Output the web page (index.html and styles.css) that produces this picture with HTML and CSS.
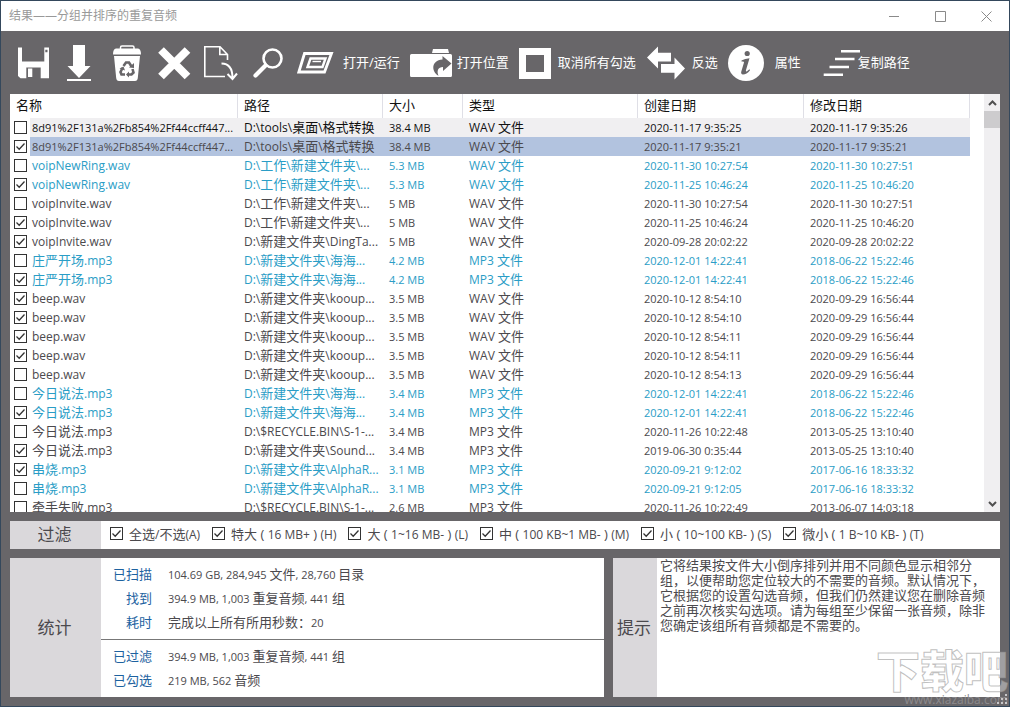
FILE: index.html
```html
<!DOCTYPE html>
<html lang="zh-CN">
<head>
<meta charset="utf-8">
<title>结果——分组并排序的重复音频</title>
<link rel="stylesheet" href="styles.css">
</head>
<body>
<div class="window">
  <header class="titlebar">
    <h1 class="title">结果——分组并排序的重复音频</h1>
    <div class="controls">
      <button class="control" aria-label="最小化"><svg width="11" height="11"><path d="M0 5.500H10"/></svg></button>
      <button class="control" aria-label="最大化"><svg width="11" height="11"><path d="M.5 .5H10.500V10.500H.5Z"/></svg></button>
      <button class="control" aria-label="关闭"><svg width="11" height="11"><path d="M.5 .5L10.500 10.500M10.500 .5L.5 10.500"/></svg></button>
    </div>
  </header>

  <nav class="toolbar">
    <div class="tools">
      <button class="tool" aria-label="保存"><svg width="47" height="41" viewBox="10 42 47 41"><path fill="#fff" fill-rule="evenodd" d="M18 47.500H22V61.500H44.300V47.500H49V78.300H40.700V67.500H26.300V78.300H20.500L18 76ZM45.300 49.800V52.200H47.500V49.800Z"/><path fill="#fff" d="M28 68.500H32.300V77H28Z"/></svg></button>
      <button class="tool" aria-label="下载"><svg width="47" height="41" viewBox="57 42 47 41"><path fill="#fff" d="M73 45H85V66H90.500L79 78L67.500 66H73ZM67 79H91V81H67Z"/></svg></button>
      <button class="tool" aria-label="删除到回收站"><svg width="47" height="41" viewBox="104 42 47 41"><path fill="none" stroke="#fff" stroke-width="1.500" d="M120.500 49V47.500Q120.500 46 122 46H132.500Q134 46 134 47.500V49"/><path fill="#fff" d="M116 48.500H138Q141 49 141 54.500H113Q113 49 116 48.500ZM114 56H140L137.800 78Q137.500 81 135 81H119Q116.500 81 116.200 78Z"/><g fill="none" stroke="#686669" stroke-width="2.600"><path d="M123.500 66L126 62.500H129L131.500 66.500M132.500 69L133.500 72.500L131.500 74.500H127.500M125 74.500H121.500L120.500 72L122.500 68"/></g><path fill="#686669" d="M129 67.500L134 68V63ZM129 71.500L126 74.500L129 77.500ZM119.500 68.500L123.500 66.500L125 70.500Z"/></svg></button>
      <button class="tool" aria-label="移除"><svg width="47" height="41" viewBox="151 42 47 41"><path stroke="#fff" stroke-width="8" d="M161 50L187.500 76.500M187.500 50L161 76.500"/></svg></button>
      <button class="tool" aria-label="移动"><svg width="47" height="41" viewBox="198 42 47 41"><g fill="none" stroke="#fff" stroke-width="1.600"><path d="M225 76.500H204.800V46.800H220L227.500 54.500V60M219.800 47V54.500H227.500"/><path d="M221.500 63.500Q232.500 63.500 232.500 78M227.500 74L232.500 79L237 73.500" stroke-width="2"/></g></svg></button>
      <button class="tool" aria-label="搜索"><svg width="47" height="41" viewBox="245 42 47 41"><g fill="none" stroke="#fff"><circle cx="272.500" cy="58.500" r="9" stroke-width="2.600"/><path d="M265.500 65.500L255.500 75.500" stroke-width="4.200" stroke-linecap="round"/></g></svg></button>
    </div>
    <div class="actions">
      <button class="action"><svg width="40" height="41" viewBox="297 42 40 41"><g fill="none" stroke="#fff"><path stroke-width="2.800" d="M304.500 53.500H331.500L324.500 72H298.800Z"/><path stroke-width="2.400" d="M310.500 58.500H325.500L322.500 67H307.500Z"/><path stroke-width="1.400" d="M312.500 61.500H321"/></g></svg><span>打开/运行</span></button>
      <button class="action"><svg width="42" height="41" viewBox="409 42 42 41"><path fill="#fff" d="M433 49H448L449 53H432ZM411.500 54H450.500Q452 54 452 55.500V75.500Q452 77 450.500 77H411.500Q410 77 410 75.500V55.500Q410 54 411.500 54Z"/><path fill="#686669" d="M442.500 56L451.500 63.500L443 71V67C438 67 436.500 71 438.500 75.800C431.500 72 430.500 60.500 442.500 59.500Z"/></svg><span>打开位置</span></button>
      <button class="action"><svg width="34" height="41" viewBox="518 42 34 41"><path fill="#fff" fill-rule="evenodd" d="M519 48H551V79H519ZM526 55V72H544V55Z"/></svg><span>取消所有勾选</span></button>
      <button class="action"><svg width="41" height="41" viewBox="645 42 41 41"><path fill="#fff" d="M647 57.500L658 46.500V52.800H671V61.500H658V68.500ZM685 68.500L674.500 57.500V64H661V72.800H674.500V79.500Z"/></svg><span>反选</span></button>
      <button class="action"><svg width="42" height="41" viewBox="727 42 42 41"><circle cx="746" cy="63" r="18" fill="#fff"/><circle cx="747.200" cy="53.500" r="2.600" fill="#686669"/><path fill="#686669" d="M741.500 60.500Q745 58.500 749.500 58.200L746 70Q745.500 72 747 71.200L749.500 69.200L750 70.200Q746.500 74.500 743 74.500Q740.500 74.200 741.300 71.500L744 62.500Q744.300 61 741.500 61.500Z"/></svg><span>属性</span></button>
      <button class="action"><svg width="42" height="41" viewBox="810 42 42 41"><path stroke="#fff" stroke-width="2.400" d="M841 51.300H860M835 59H854.500M829.500 67H849M823.700 74.700H843"/></svg><span>复制路径</span></button>
    </div>
  </nav>

  <main class="content">
    <section class="list">
      <div class="rows">
        <table class="files">
          <colgroup><col><col class="w-path"><col class="w-size"><col class="w-type"><col class="w-date"><col class="w-date"></colgroup>
          <thead><tr><th>名称</th><th>路径</th><th>大小</th><th>类型</th><th>创建日期</th><th>修改日期</th></tr></thead>
          <tbody>
            <tr class="hot"><td><label><input type="checkbox"><span class="name hash">8d91%2F131a%2Fb854%2Ff44ccff447...</span></label></td><td>D:\tools\<span class="zh">桌面</span>\<span class="zh">格式转换</span></td><td>38.4 MB</td><td>WAV <span class="zh">文件</span></td><td>2020-11-17 9:35:25</td><td>2020-11-17 9:35:26</td></tr>
            <tr class="selected"><td><label><input type="checkbox" checked><span class="name hash">8d91%2F131a%2Fb854%2Ff44ccff447...</span></label></td><td>D:\tools\<span class="zh">桌面</span>\<span class="zh">格式转换</span></td><td>38.4 MB</td><td>WAV <span class="zh">文件</span></td><td>2020-11-17 9:35:21</td><td>2020-11-17 9:35:21</td></tr>
            <tr class="alt"><td><label><input type="checkbox"><span class="name">voipNewRing.wav</span></label></td><td>D:\<span class="zh">工作</span>\<span class="zh">新建文件夹</span>\...</td><td>5.3 MB</td><td>WAV <span class="zh">文件</span></td><td>2020-11-30 10:27:54</td><td>2020-11-30 10:27:51</td></tr>
            <tr class="alt"><td><label><input type="checkbox" checked><span class="name">voipNewRing.wav</span></label></td><td>D:\<span class="zh">工作</span>\<span class="zh">新建文件夹</span>\...</td><td>5.3 MB</td><td>WAV <span class="zh">文件</span></td><td>2020-11-25 10:46:24</td><td>2020-11-25 10:46:20</td></tr>
            <tr><td><label><input type="checkbox"><span class="name">voipInvite.wav</span></label></td><td>D:\<span class="zh">工作</span>\<span class="zh">新建文件夹</span>\...</td><td>5 MB</td><td>WAV <span class="zh">文件</span></td><td>2020-11-30 10:27:54</td><td>2020-11-30 10:27:51</td></tr>
            <tr><td><label><input type="checkbox" checked><span class="name">voipInvite.wav</span></label></td><td>D:\<span class="zh">工作</span>\<span class="zh">新建文件夹</span>\...</td><td>5 MB</td><td>WAV <span class="zh">文件</span></td><td>2020-11-25 10:46:24</td><td>2020-11-25 10:46:20</td></tr>
            <tr><td><label><input type="checkbox" checked><span class="name">voipInvite.wav</span></label></td><td>D:\<span class="zh">新建文件夹</span>\DingTa...</td><td>5 MB</td><td>WAV <span class="zh">文件</span></td><td>2020-09-28 20:02:22</td><td>2020-09-28 20:02:22</td></tr>
            <tr class="alt"><td><label><input type="checkbox"><span class="name"><span class="zh">庄严开场</span>.mp3</span></label></td><td>D:\<span class="zh">新建文件夹</span>\<span class="zh">海海</span>...</td><td>4.2 MB</td><td>MP3 <span class="zh">文件</span></td><td>2020-12-01 14:22:41</td><td>2018-06-22 15:22:46</td></tr>
            <tr class="alt"><td><label><input type="checkbox" checked><span class="name"><span class="zh">庄严开场</span>.mp3</span></label></td><td>D:\<span class="zh">新建文件夹</span>\<span class="zh">海海</span>...</td><td>4.2 MB</td><td>MP3 <span class="zh">文件</span></td><td>2020-12-01 14:22:41</td><td>2018-06-22 15:22:46</td></tr>
            <tr><td><label><input type="checkbox" checked><span class="name">beep.wav</span></label></td><td>D:\<span class="zh">新建文件夹</span>\kooup...</td><td>3.5 MB</td><td>WAV <span class="zh">文件</span></td><td>2020-10-12 8:54:10</td><td>2020-09-29 16:56:44</td></tr>
            <tr><td><label><input type="checkbox" checked><span class="name">beep.wav</span></label></td><td>D:\<span class="zh">新建文件夹</span>\kooup...</td><td>3.5 MB</td><td>WAV <span class="zh">文件</span></td><td>2020-10-12 8:54:10</td><td>2020-09-29 16:56:44</td></tr>
            <tr><td><label><input type="checkbox" checked><span class="name">beep.wav</span></label></td><td>D:\<span class="zh">新建文件夹</span>\kooup...</td><td>3.5 MB</td><td>WAV <span class="zh">文件</span></td><td>2020-10-12 8:54:11</td><td>2020-09-29 16:56:44</td></tr>
            <tr><td><label><input type="checkbox" checked><span class="name">beep.wav</span></label></td><td>D:\<span class="zh">新建文件夹</span>\kooup...</td><td>3.5 MB</td><td>WAV <span class="zh">文件</span></td><td>2020-10-12 8:54:11</td><td>2020-09-29 16:56:44</td></tr>
            <tr><td><label><input type="checkbox"><span class="name">beep.wav</span></label></td><td>D:\<span class="zh">新建文件夹</span>\kooup...</td><td>3.5 MB</td><td>WAV <span class="zh">文件</span></td><td>2020-10-12 8:54:13</td><td>2020-09-29 16:56:44</td></tr>
            <tr class="alt"><td><label><input type="checkbox"><span class="name"><span class="zh">今日说法</span>.mp3</span></label></td><td>D:\<span class="zh">新建文件夹</span>\<span class="zh">海海</span>...</td><td>3.4 MB</td><td>MP3 <span class="zh">文件</span></td><td>2020-12-01 14:22:41</td><td>2018-06-22 15:22:46</td></tr>
            <tr class="alt"><td><label><input type="checkbox" checked><span class="name"><span class="zh">今日说法</span>.mp3</span></label></td><td>D:\<span class="zh">新建文件夹</span>\<span class="zh">海海</span>...</td><td>3.4 MB</td><td>MP3 <span class="zh">文件</span></td><td>2020-12-01 14:22:41</td><td>2018-06-22 15:22:46</td></tr>
            <tr><td><label><input type="checkbox"><span class="name"><span class="zh">今日说法</span>.mp3</span></label></td><td>D:\$RECYCLE.BIN\S-1-...</td><td>3.4 MB</td><td>MP3 <span class="zh">文件</span></td><td>2020-11-26 10:22:48</td><td>2013-05-25 13:10:40</td></tr>
            <tr><td><label><input type="checkbox" checked><span class="name"><span class="zh">今日说法</span>.mp3</span></label></td><td>D:\<span class="zh">新建文件夹</span>\Sound...</td><td>3.4 MB</td><td>MP3 <span class="zh">文件</span></td><td>2019-06-30 0:35:44</td><td>2013-05-25 13:10:40</td></tr>
            <tr class="alt"><td><label><input type="checkbox" checked><span class="name"><span class="zh">串烧</span>.mp3</span></label></td><td>D:\<span class="zh">新建文件夹</span>\AlphaR...</td><td>3.1 MB</td><td>MP3 <span class="zh">文件</span></td><td>2020-09-21 9:12:02</td><td>2017-06-16 18:33:32</td></tr>
            <tr class="alt"><td><label><input type="checkbox"><span class="name"><span class="zh">串烧</span>.mp3</span></label></td><td>D:\<span class="zh">新建文件夹</span>\AlphaR...</td><td>3.1 MB</td><td>MP3 <span class="zh">文件</span></td><td>2020-09-21 9:12:05</td><td>2017-06-16 18:33:32</td></tr>
            <tr><td><label><input type="checkbox"><span class="name"><span class="zh">牵手失败</span>.mp3</span></label></td><td>D:\$RECYCLE.BIN\S-1-...</td><td>2.6 MB</td><td>MP3 <span class="zh">文件</span></td><td>2020-11-26 10:22:49</td><td>2013-06-07 14:03:18</td></tr>
          </tbody>
        </table>
      </div>
      <div class="scrollbar">
        <button class="arrow" aria-label="向上滚动"><svg width="9" height="6"><path d="M1 5L4.500 1.500L8 5"/></svg></button>
        <div class="track"><div class="thumb"></div></div>
        <button class="arrow" aria-label="向下滚动"><svg width="9" height="6"><path d="M1 1L4.500 4.500L8 1"/></svg></button>
      </div>
    </section>

    <section class="panel filter">
      <h2 class="caption">过滤</h2>
      <div class="filters">
        <label><input type="checkbox" checked><span><span class="zh">全选</span>/<span class="zh">不选</span>(A)</span></label>
        <label><input type="checkbox" checked><span><span class="zh">特大 ( </span>16 MB+<span class="zh"> ) </span>(H)</span></label>
        <label><input type="checkbox" checked><span><span class="zh">大 ( </span>1~16 MB-<span class="zh"> ) </span>(L)</span></label>
        <label><input type="checkbox" checked><span><span class="zh">中 ( </span>100 KB~1 MB-<span class="zh"> ) </span>(M)</span></label>
        <label><input type="checkbox" checked><span><span class="zh">小 ( </span>10~100 KB-<span class="zh"> ) </span>(S)</span></label>
        <label><input type="checkbox" checked><span><span class="zh">微小 ( </span>1 B~10 KB-<span class="zh"> ) </span>(T)</span></label>
      </div>
    </section>

    <div class="bottom">
      <section class="panel stats">
        <h2 class="caption">统计</h2>
        <div class="figures">
          <dl>
            <dt>已扫描</dt><dd>104.69 GB, 284,945 <span class="zh">文件</span>, 28,760 <span class="zh">目录</span></dd>
            <dt>找到</dt><dd>394.9 MB, 1,003 <span class="zh">重复音频</span>, 441 <span class="zh">组</span></dd>
            <dt>耗时</dt><dd><span class="zh">完成以上所有所用秒数：</span>20</dd>
          </dl>
          <dl>
            <dt>已过滤</dt><dd>394.9 MB, 1,003 <span class="zh">重复音频</span>, 441 <span class="zh">组</span></dd>
            <dt>已勾选</dt><dd>219 MB, 562 <span class="zh">音频</span></dd>
          </dl>
        </div>
      </section>
      <section class="panel tips">
        <h2 class="caption">提示</h2>
        <p>它将结果按文件大小倒序排列并用不同颜色显示相邻分组，以便帮助您定位较大的不需要的音频。默认情况下，它根据您的设置勾选音频，但我们仍然建议您在删除音频之前再次核实勾选项。请为每组至少保留一张音频，除非您确定该组所有音频都是不需要的。</p>
      </section>
    </div>
  </main>

  <div class="watermark"><span class="mark">下载吧</span><span class="site">www.xiazaiba.com</span></div>
  <svg class="grip" width="11" height="11" fill="#c8c8ca"><path d="M8 0h2v2h-2zM4 4h2v2h-2zM8 4h2v2h-2zM0 8h2v2h-2zM4 8h2v2h-2zM8 8h2v2h-2z"/></svg>
</div>
</body>
</html>
```
FILE: styles.css
```css
* {
  box-sizing: border-box;
}

body {
  margin: 0;
  font: 12px "Open Sans", "Noto Sans CJK SC", sans-serif;
  color: #4b494d;
}

button {
  padding: 0;
  border: 0;
  background: none;
  color: inherit;
  font: inherit;
}

h1,
h2,
p,
dl,
dd {
  margin: 0;
  font-weight: 400;
}

.window {
  position: relative;
  display: flex;
  flex-direction: column;
  height: 100vh;
  overflow: hidden;
  border: 1px solid #34485c;
  background: #686669;
}

.zh {
  font-size: 13px;
}

/* Title bar */
.titlebar {
  display: flex;
  flex: none;
  justify-content: space-between;
  height: 30px;
  padding-left: 8px;
  background: #fff;
}

.title {
  color: #999;
  font-size: 12px;
  line-height: 30px;
}

.controls {
  display: flex;
}

.control {
  display: grid;
  place-items: center;
  width: 46px;
}

.control svg {
  fill: none;
  stroke: #8a8a8a;
}

/* Toolbar */
.toolbar {
  display: flex;
  flex: none;
  height: 63px;
  padding-left: 9px;
  color: #fff;
}

.tools,
.actions {
  display: flex;
}

.tool,
.action {
  display: flex;
  align-items: center;
}

.actions {
  gap: 9px;
  padding-left: 5px;
  font-size: 13px;
  white-space: nowrap;
}

.action {
  gap: 6px;
}

.action span {
  padding-bottom: 2px;
}

.toolbar svg {
  flex: none;
  overflow: visible;
}

/* Content */
.content {
  display: flex;
  flex: 1;
  flex-direction: column;
  gap: 9px;
  min-height: 0;
  padding: 0 9px 9px;
}

.list {
  display: flex;
  flex: 1;
  min-height: 0;
  overflow: hidden;
  background: #fff;
}

.rows {
  flex: 1;
  padding-right: 14px;
  overflow: hidden;
}

.files {
  width: 100%;
  border-collapse: separate;
  border-spacing: 0;
  table-layout: fixed;
}

.w-path {
  width: 145px;
}

.w-size {
  width: 80px;
}

.w-type {
  width: 175px;
}

.w-date {
  width: 166px;
}

th {
  height: 24px;
  padding: 0 6px 2px;
  border-right: 1px solid #dfdfe6;
  color: #111;
  font-size: 13px;
  font-weight: 400;
  line-height: 18px;
  text-align: left;
}

td {
  height: 19px;
  padding: 0 0 0 6px;
  overflow: hidden;
  line-height: 19px;
  white-space: nowrap;
}

td:first-child {
  padding-left: 4px;
}

td:nth-child(3),
td:nth-child(5),
td:nth-child(6) {
  font-size: 11px;
}

td .zh {
  line-height: 18px;
}

td label {
  display: flex;
  align-items: center;
  gap: 3px;
}

.name {
  flex: 1;
  height: 19px;
  padding-left: 2px;
}

.hash {
  font-size: 11px;
}

.alt {
  color: #2a9dc6;
}

.hot {
  color: #111;
}

.hot td:not(:first-child),
.hot .name {
  background: #f0eff1;
}

.selected td:not(:first-child),
.selected .name {
  background: #b2c3df;
}

input[type="checkbox"] {
  flex: none;
  width: 13px;
  height: 13px;
  margin: 0;
  border: 1px solid #333;
  background: #fff;
  appearance: none;
}

input[type="checkbox"]:checked {
  background: #fff url("data:image/svg+xml,%3Csvg xmlns='http://www.w3.org/2000/svg' width='11' height='11'%3E%3Cpath d='M1.500 5.500L4.200 8.200L9.500 2.500' fill='none' stroke='%23333' stroke-width='1.300'/%3E%3C/svg%3E");
}

.scrollbar {
  display: flex;
  flex-direction: column;
  width: 16px;
  background: #f0eff1;
}

.arrow {
  display: grid;
  place-items: center;
  height: 17px;
}

.arrow svg {
  fill: none;
  stroke: #505050;
  stroke-width: 2;
}

.track {
  flex: 1;
}

.thumb {
  height: 17px;
  background: #cdccce;
}

/* Captioned panels */
.panel {
  display: flex;
  flex: none;
  background: #fff;
}

.caption {
  display: grid;
  flex: none;
  place-items: center;
  width: 91px;
  padding-right: 2px;
  background: #dad8db;
  font-size: 17px;
  line-height: 28px;
}

.filters {
  display: flex;
  align-items: center;
  gap: 12px;
  height: 28px;
  padding: 0 9px 4px;
  font-size: 12px;
  white-space: nowrap;
}

.filters label {
  display: flex;
  align-items: center;
  gap: 6px;
}

.filters input[type="checkbox"] {
  margin-top: 1px;
}

.bottom {
  display: flex;
  flex: none;
  gap: 9px;
}

.stats {
  flex: 594 1 0;
}

.figures {
  flex: 1;
  font-size: 11px;
}

.figures dl {
  display: grid;
  grid-template-columns: 51px 1fr;
  column-gap: 16px;
  padding: 4px 0 5px;
  line-height: 24px;
}

.figures dl + dl {
  border-top: 1px solid #777;
}

.figures dt {
  color: #1d62a0;
  font-size: 13px;
  text-align: right;
}

.figures dd {
  height: 24px;
}

.tips {
  flex: 387 1 0;
}

.tips .caption {
  width: 44px;
}

.tips p {
  flex: 1;
  padding: 0 14px 0 3px;
  font-size: 13px;
  line-height: 15px;
  text-spacing-trim: space-all;
}

/* Overlays */
.watermark {
  position: absolute;
  right: 1px;
  bottom: 0;
  display: flex;
  flex-direction: column;
  align-items: flex-end;
  pointer-events: none;
}

.mark {
  color: rgba(255, 255, 255, 0.4);
  font-size: 44px;
  font-weight: 900;
  line-height: 46px;
  -webkit-text-stroke: 1px rgba(150, 150, 150, 0.6);
}

.site {
  color: #8c8a8d;
  font-size: 12px;
  line-height: 12px;
}

.grip {
  position: absolute;
  right: 1px;
  bottom: 1px;
}
```
